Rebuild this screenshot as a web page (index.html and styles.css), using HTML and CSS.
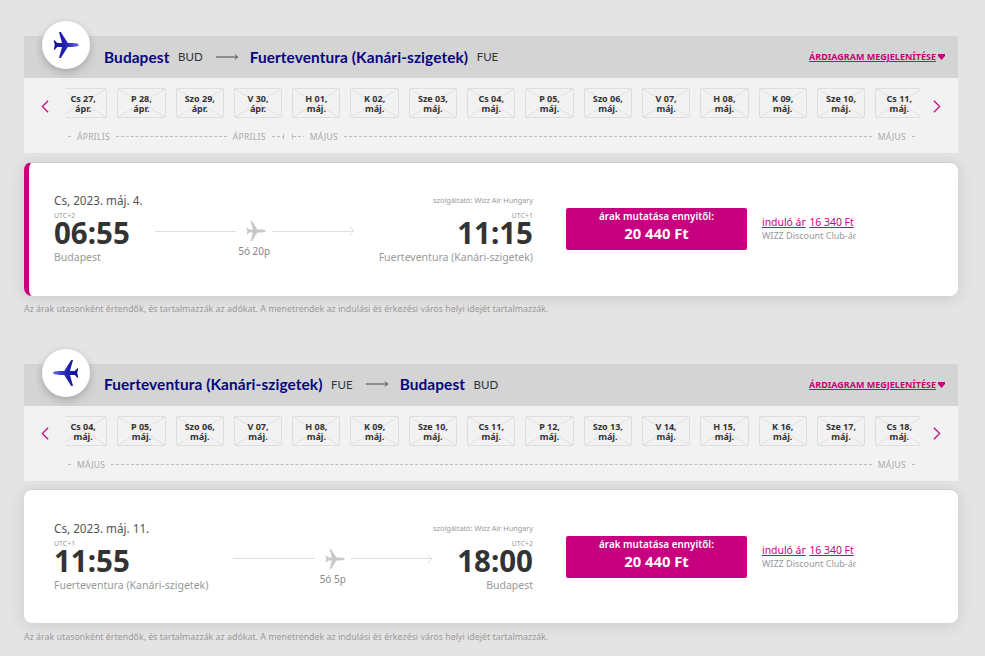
FILE: index.html
```html
<!DOCTYPE html>
<html lang="hu">
<head>
<meta charset="utf-8">
<title>Járatok</title>
<link rel="stylesheet" href="styles.css">
</head>
<body>
<svg class="defs" width="0" height="0" aria-hidden="true">
  <defs>
    <linearGradient id="wizz" x1="0" y1="0" x2="1" y2="0">
      <stop offset="0" stop-color="#0c0c9a"/>
      <stop offset="0.55" stop-color="#2a2ab4"/>
      <stop offset="1" stop-color="#6a6ae8"/>
    </linearGradient>
    <symbol id="plane" viewBox="0 0 26 26">
      <path d="M26 13c0-1-3-1.900-6.500-1.900h-4.700L7.800 0H6l3 11.100H4.200L1.600 8.300H.7l1.100 4.700-1.100 4.700h.9l2.600-2.800H9L6 26h1.800l7-11.100h4.700C23 14.900 26 14 26 13z"/>
    </symbol>
  </defs>
</svg>

<section class="leg">
  <header class="route">
    <span class="badge"><svg class="badge-plane"><use href="#plane"/></svg></span>
    <span class="city">Budapest</span><span class="iata">BUD</span>
    <svg class="route-arrow" viewBox="0 0 22 8"><path d="M0 4h21.500M19 1.500 21.500 4 19 6.500"/></svg>
    <span class="city">Fuerteventura (Kanári-szigetek)</span><span class="iata">FUE</span>
    <a class="chart-link"><span class="chart-text">ÁRDIAGRAM MEGJELENÍTÉSE</span><svg class="heart" viewBox="0 0 7 6"><path d="M0 0h7v2L3.500 6 0 2z"/></svg></a>
  </header>
  <div class="strip">
    <div class="days">
      <svg class="chev" viewBox="0 0 9 15"><path d="M8 1 1.500 7.500 8 14"/></svg>
      <div class="track">
        <div class="day">Cs 27,<br>ápr.</div>
        <div class="day">P 28,<br>ápr.</div>
        <div class="day">Szo 29,<br>ápr.</div>
        <div class="day">V 30,<br>ápr.</div>
        <div class="day">H 01,<br>máj.</div>
        <div class="day">K 02,<br>máj.</div>
        <div class="day">Sze 03,<br>máj.</div>
        <div class="day">Cs 04,<br>máj.</div>
        <div class="day">P 05,<br>máj.</div>
        <div class="day">Szo 06,<br>máj.</div>
        <div class="day">V 07,<br>máj.</div>
        <div class="day">H 08,<br>máj.</div>
        <div class="day">K 09,<br>máj.</div>
        <div class="day">Sze 10,<br>máj.</div>
        <div class="day">Cs 11,<br>máj.</div>
      </div>
      <svg class="chev" viewBox="0 0 9 15"><path d="M1 1l6.500 6.500L1 14"/></svg>
    </div>
    <div class="months">
      <i class="dash short"></i><span>ÁPRILIS</span><i class="dash fixed"></i><span>ÁPRILIS</span><i class="dash tick-end brk"></i><i class="dash tick-start brk"></i><span>MÁJUS</span><i class="dash"></i><span>MÁJUS</span><i class="dash short"></i>
    </div>
  </div>
  <article class="card selected">
    <div class="info">
      <div class="meta"><span class="date">Cs, 2023. máj. 4.</span><span class="operator">szolgáltató: Wizz Air Hungary</span></div>
      <div class="times">
        <div class="stop">
          <div class="utc">UTC+2</div>
          <div class="time">06:55</div>
          <div class="place">Budapest</div>
        </div>
        <div class="path">
          <div class="path-line">
            <i class="rule"></i>
            <svg class="path-plane"><use href="#plane"/></svg>
            <i class="rule"></i>
            <svg class="path-tip" viewBox="0 0 5 10"><path d="M.5.500 4.500 5 .5 9.500"/></svg>
          </div>
          <div class="duration">5ó 20p</div>
        </div>
        <div class="stop end">
          <div class="utc">UTC+1</div>
          <div class="time">11:15</div>
          <div class="place">Fuerteventura (Kanári-szigetek)</div>
        </div>
      </div>
    </div>
    <button class="price-btn"><span class="price-label">árak mutatása ennyitől:</span><span class="price">20 440 Ft</span></button>
    <div class="club">
      <div><a class="club-link">induló ár</a> <a class="club-link">16 340 Ft</a></div>
      <div class="club-note">WIZZ Discount Club-ár</div>
    </div>
  </article>
  <p class="note">Az árak utasonként értendők, és tartalmazzák az adókat. A menetrendek az indulási és érkezési város helyi idejét tartalmazzák.</p>
</section>

<section class="leg">
  <header class="route">
    <span class="badge"><svg class="badge-plane flip"><use href="#plane"/></svg></span>
    <span class="city">Fuerteventura (Kanári-szigetek)</span><span class="iata">FUE</span>
    <svg class="route-arrow" viewBox="0 0 22 8"><path d="M0 4h21.500M19 1.500 21.500 4 19 6.500"/></svg>
    <span class="city">Budapest</span><span class="iata">BUD</span>
    <a class="chart-link"><span class="chart-text">ÁRDIAGRAM MEGJELENÍTÉSE</span><svg class="heart" viewBox="0 0 7 6"><path d="M0 0h7v2L3.500 6 0 2z"/></svg></a>
  </header>
  <div class="strip">
    <div class="days">
      <svg class="chev" viewBox="0 0 9 15"><path d="M8 1 1.500 7.500 8 14"/></svg>
      <div class="track">
        <div class="day">Cs 04,<br>máj.</div>
        <div class="day">P 05,<br>máj.</div>
        <div class="day">Szo 06,<br>máj.</div>
        <div class="day">V 07,<br>máj.</div>
        <div class="day">H 08,<br>máj.</div>
        <div class="day">K 09,<br>máj.</div>
        <div class="day">Sze 10,<br>máj.</div>
        <div class="day">Cs 11,<br>máj.</div>
        <div class="day">P 12,<br>máj.</div>
        <div class="day">Szo 13,<br>máj.</div>
        <div class="day">V 14,<br>máj.</div>
        <div class="day">H 15,<br>máj.</div>
        <div class="day">K 16,<br>máj.</div>
        <div class="day">Sze 17,<br>máj.</div>
        <div class="day">Cs 18,<br>máj.</div>
      </div>
      <svg class="chev" viewBox="0 0 9 15"><path d="M1 1l6.500 6.500L1 14"/></svg>
    </div>
    <div class="months">
      <i class="dash short"></i><span>MÁJUS</span><i class="dash"></i><span>MÁJUS</span><i class="dash short"></i>
    </div>
  </div>
  <article class="card">
    <div class="info">
      <div class="meta"><span class="date">Cs, 2023. máj. 11.</span><span class="operator">szolgáltató: Wizz Air Hungary</span></div>
      <div class="times">
        <div class="stop">
          <div class="utc">UTC+1</div>
          <div class="time">11:55</div>
          <div class="place">Fuerteventura (Kanári-szigetek)</div>
        </div>
        <div class="path">
          <div class="path-line">
            <i class="rule"></i>
            <svg class="path-plane"><use href="#plane"/></svg>
            <i class="rule"></i>
            <svg class="path-tip" viewBox="0 0 5 10"><path d="M.5.500 4.500 5 .5 9.500"/></svg>
          </div>
          <div class="duration">5ó 5p</div>
        </div>
        <div class="stop end">
          <div class="utc">UTC+2</div>
          <div class="time">18:00</div>
          <div class="place">Budapest</div>
        </div>
      </div>
    </div>
    <button class="price-btn"><span class="price-label">árak mutatása ennyitől:</span><span class="price">20 440 Ft</span></button>
    <div class="club">
      <div><a class="club-link">induló ár</a> <a class="club-link">16 340 Ft</a></div>
      <div class="club-note">WIZZ Discount Club-ár</div>
    </div>
  </article>
  <p class="note">Az árak utasonként értendők, és tartalmazzák az adókat. A menetrendek az indulási és érkezési város helyi idejét tartalmazzák.</p>
</section>
</body>
</html>
```
FILE: styles.css
```css
* { box-sizing: border-box; }
html, body { height: 100%; }
body {
  margin: 0;
  padding: 36px 27px 0 24px;
  background: #e4e4e4;
  font-family: "Noto Sans", "Open Sans", sans-serif;
  color: #333;
  overflow: hidden;
}
.defs { position: absolute; }
.leg { margin-bottom: 48.600px; }
.leg:last-child { margin-bottom: 0; }

.route {
  position: relative;
  display: flex;
  align-items: center;
  height: 42px;
  padding: 0 13px 1px 80px;
  background: #d4d4d4;
}
.badge {
  position: absolute;
  left: 18px;
  top: -15px;
  width: 48px;
  height: 48px;
  display: flex;
  align-items: center;
  justify-content: center;
  border-radius: 50%;
  background: #fff;
  box-shadow: 0 3px 8px rgba(0, 0, 0, .22);
}
.badge-plane { width: 26px; height: 26px; fill: url(#wizz); }
.badge-plane.flip { transform: scaleX(-1); }
.city {
  font-family: Lato, sans-serif;
  font-size: 15.400px;
  font-weight: 700;
  color: #06067e;
  letter-spacing: .1px;
}
.iata {
  margin-left: 8.500px;
  font-family: Lato, sans-serif;
  font-size: 11.500px;
  color: #333;
}
.route-arrow {
  width: 22px;
  height: 8px;
  margin: 0 12px 0 13px;
  fill: none;
  stroke: #444;
  stroke-width: 1;
}
.chart-link {
  margin-left: auto;
  display: flex;
  align-items: center;
  color: #c6007e;
  font-size: 9px;
  font-weight: 700;
}
.chart-text { text-decoration: underline; }
.heart { width: 7px; height: 6px; margin-left: 2px; margin-top: 1px; fill: #c6007e; }

.strip {
  height: 75px;
  background: #f2f2f2;
  padding-top: 10px;
}
.days {
  display: flex;
  align-items: center;
  padding: 0 17px;
  height: 30px;
}
.chev {
  flex: none;
  width: 8px;
  height: 15px;
  margin-top: 6px;
  fill: none;
  stroke: #c6007e;
  stroke-width: 1.300;
}
.track {
  flex: 1;
  min-width: 0;
  margin: 0 13px 0 17px;
  height: 30px;
  display: flex;
  gap: 10px;
  overflow: hidden;
}
.day {
  flex: none;
  width: 48.300px;
  height: 30px;
  border: 1px solid #dedede;
  border-radius: 2px;
  background:
    linear-gradient(to top right, transparent calc(50% - .7px), #dcdcdc, transparent calc(50% + .7px)),
    linear-gradient(to bottom right, transparent calc(50% - .7px), #dcdcdc, transparent calc(50% + .7px));
  font-size: 9px;
  font-weight: 700;
  line-height: 10px;
  padding-top: 5px;
  text-align: center;
  color: #333;
}
.day:first-child { margin-left: -7px; }
.months {
  display: flex;
  align-items: center;
  margin: 12.500px 0 0;
  padding: 0 43px 0 44px;
  height: 12px;
  gap: 6px;
  font-size: 8.500px;
  color: #a9a9a9;
  letter-spacing: .3px;
}
.dash { flex: 1; border-top: 1px dashed #bdbdbd; }
.dash.short { flex: 0 0 3px; }
.dash.fixed { flex: 0 0 111px; }
.dash.brk { flex: 0 0 12px; height: 5px; border-top: none; background: repeating-linear-gradient(90deg, #bdbdbd 0 3px, transparent 3px 5px) 0 2px / 100% 1px no-repeat; }
.tick-end { border-right: 1px solid #bdbdbd; }
.tick-start { border-left: 1px solid #bdbdbd; margin-left: 2px; }

.card {
  display: flex;
  align-items: flex-start;
  height: 134px;
  margin-top: 8.500px;
  padding: 29.500px 0 0 30px;
  background: #fff;
  border-radius: 8px;
  box-shadow: 0 2px 16px rgba(0, 0, 0, .12);
  border-top: 1px solid #d0d0d0;
}
.card.selected { border-left: 5px solid #c6007e; padding-left: 25px; }
.info { width: 479px; }
.meta { display: flex; justify-content: space-between; align-items: flex-end; }
.date { font-size: 11.700px; line-height: 16px; color: #555; }
.operator { font-size: 7.300px; color: #999; line-height: 11px; margin-bottom: 2px; }
.times { display: flex; gap: 25px; margin-top: 4px; }
.stop { flex: none; }
.stop.end { text-align: right; }
.utc { font-size: 7px; line-height: 8px; color: #999; }
.time { font-size: 29.500px; font-weight: 700; line-height: 26px; color: #333; }
.place { font-size: 10.500px; line-height: 20px; color: #999; margin-top: 1px; }
.path { flex: 1; min-width: 0; margin-top: 9px; }
.path-line { display: flex; align-items: center; height: 20px; }
.rule { flex: 1; height: 1px; background: #dedede; }
.path-plane { flex: none; width: 20px; height: 20px; margin: 0 6px 0 10px; fill: #c8c8c8; }
.path-tip { flex: none; width: 5px; height: 10px; margin-left: -5px; fill: none; stroke: #d8d8d8; stroke-width: 1; }
.duration { font-size: 10px; line-height: 14px; color: #888; text-align: center; margin-top: 3px; }

.price-btn {
  flex: none;
  width: 181px;
  height: 42px;
  margin: 16px 15px 0 33px;
  padding: 1px 0 0;
  display: flex;
  flex-direction: column;
  align-items: center;
  border: 0;
  border-radius: 2px;
  background: #c6007e;
  color: #fff;
  font-family: inherit;
}
.price-label { font-size: 9.900px; line-height: 14px; font-weight: 600; }
.price { font-size: 14.800px; line-height: 21px; font-weight: 700; }
.club { font-size: 10.400px; line-height: 14px; margin-top: 23px; }
.club-link { color: #c6007e; text-decoration: underline; margin-right: 1px; }
.club-note { color: #999; font-size: 9px; }
.note { margin: 7.500px 0 0; font-size: 8.850px; line-height: 12px; color: #999; }
```
